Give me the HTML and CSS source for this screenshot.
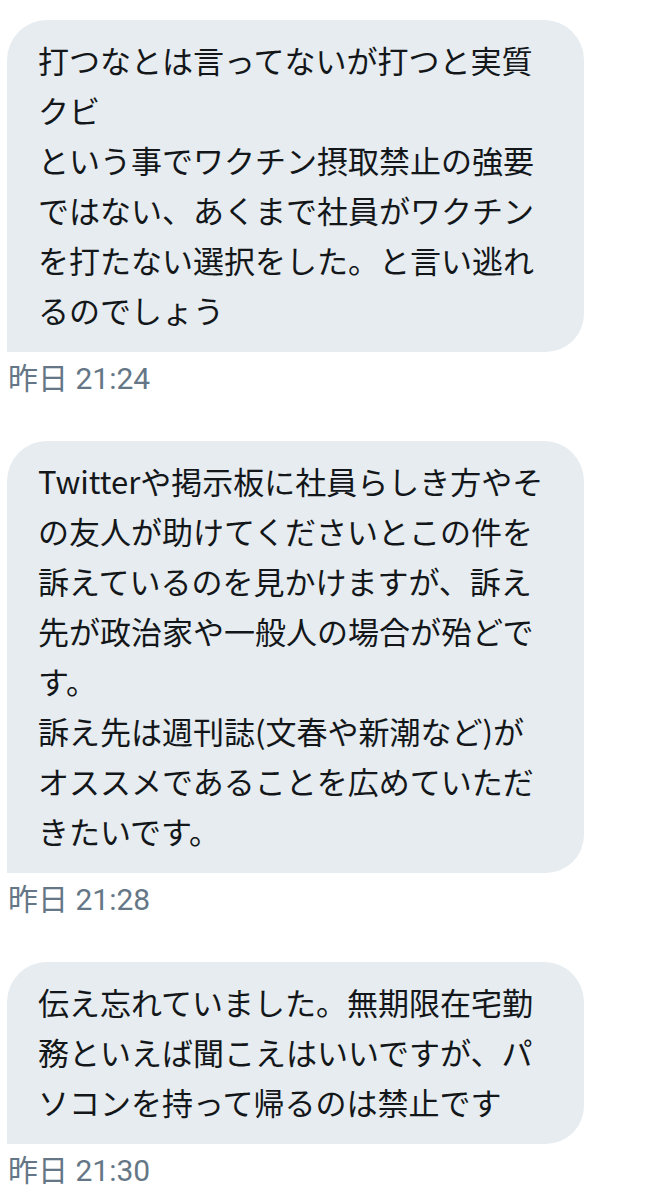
FILE: index.html
```html
<!DOCTYPE html>
<html lang="ja">
<head>
<meta charset="utf-8">
<link rel="stylesheet" href="styles.css">
</head>
<body>
<div class="thread">
  <div class="msg">
    <div class="bubble">打つなとは言ってないが打つと実質<br>クビ<br>という事でワクチン摂取禁止の強要<br>ではない、あくまで社員がワクチン<br>を打たない選択をした。と言い逃れ<br>るのでしょう</div>
    <div class="time">昨日 21:24</div>
  </div>
  <div class="msg">
    <div class="bubble">Twitterや掲示板に社員らしき方やそ<br>の友人が助けてくださいとこの件を<br>訴えているのを見かけますが、訴え<br>先が政治家や一般人の場合が殆どで<br>す。<br>訴え先は週刊誌(文春や新潮など)が<br>オススメであることを広めていただ<br>きたいです。</div>
    <div class="time">昨日 21:28</div>
  </div>
  <div class="msg">
    <div class="bubble">伝え忘れていました。無期限在宅勤<br>務といえば聞こえはいいですが、パ<br>ソコンを持って帰るのは禁止です</div>
    <div class="time">昨日 21:30</div>
  </div>
</div>
</body>
</html>
```
FILE: styles.css
```css
html, body {
  margin: 0;
  padding: 0;
  background: #ffffff;
}
.thread {
  padding: 20px 0 0 7px;
  display: flex;
  flex-direction: column;
}
.msg {
  display: flex;
  flex-direction: column;
  margin-bottom: 45px;
}
.bubble {
  width: 577px;
  box-sizing: border-box;
  background: #e6ecf0;
  border-radius: 40px 40px 38px 0;
  padding: 15px 20px 17px 31px;
  font-family: "Noto Sans CJK JP", "Noto Sans", sans-serif;
  font-size: 31px;
  line-height: 50px;
  color: #14171a;
  white-space: nowrap;
}
.time {
  margin-top: 10px;
  padding-left: 1px;
  font-family: Roboto, "Noto Sans CJK JP", sans-serif;
  font-size: 30px;
  line-height: 34px;
  height: 34px;
  color: #657786;
}
```
